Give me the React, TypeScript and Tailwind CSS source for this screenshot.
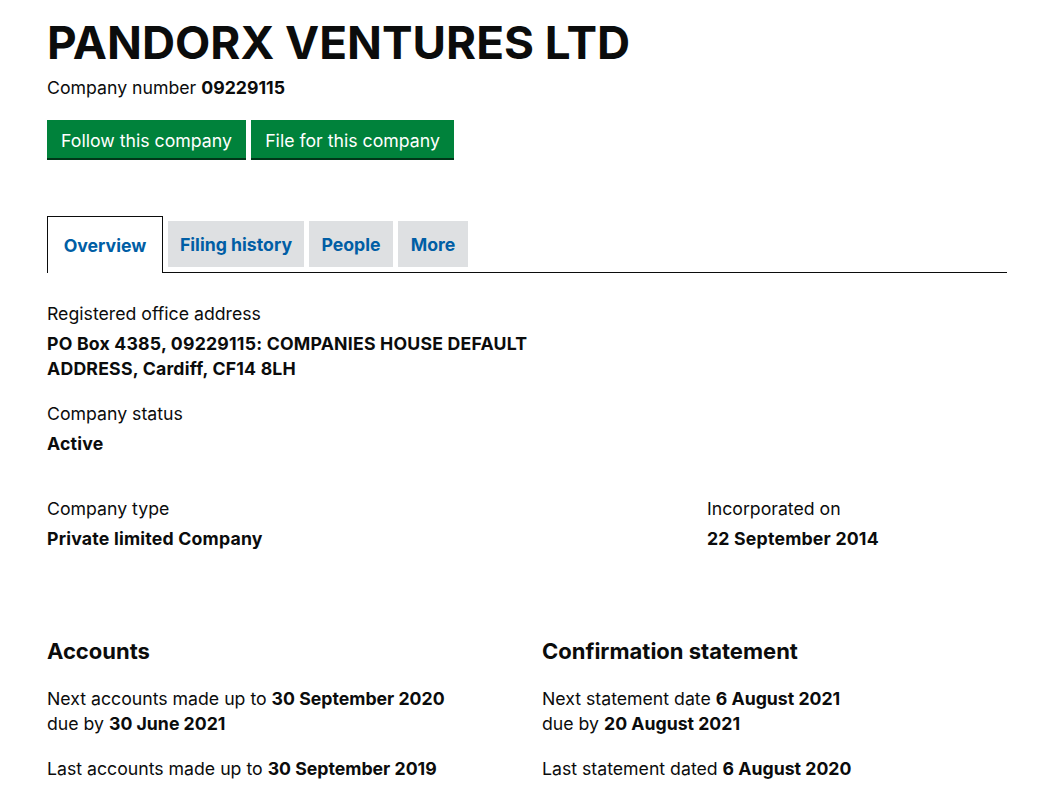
import React from "react";

const F = { fontFamily: "Inter, 'Noto Sans', sans-serif" };

function Field({ label, children }: { label: string; children: React.ReactNode }) {
  return (
    <div>
      <div className="text-[17.7px] leading-[25px] text-[#0b0c0c]">{label}</div>
      <div className="mt-[5px] text-[17.7px] leading-[25px] font-bold text-[#0b0c0c] tracking-[0.2px]">{children}</div>
    </div>
  );
}

export default function App() {
  return (
    <div className="min-h-[803px] bg-white text-[#0b0c0c]" style={F}>
      <div className="w-[960px] ml-[47px]">
        <h1 className="pt-[14px] text-[45.8px] leading-[58px] font-bold">PANDORX VENTURES LTD</h1>
        <p className="mt-[3px] text-[17.7px] leading-[25px]">
          Company number <strong className="font-bold">09229115</strong>
        </p>
        <div className="mt-[20px] flex gap-[5px]">
          <button className="h-[38px] w-[199px] pt-[4px] bg-[#00823b] text-white text-[17.7px] shadow-[0_2px_0_#003618]">Follow this company</button>
          <button className="h-[38px] w-[203px] pt-[4px] bg-[#00823b] text-white text-[17.7px] shadow-[0_2px_0_#003618]">File for this company</button>
        </div>
        <div className="mt-[58px] flex items-end border-b border-[#0b0c0c] gap-[5px]">
          <div className="h-[57px] w-[116px] pt-[3px] -mb-px border border-b-0 border-[#0b0c0c] bg-white flex items-center justify-center text-[#005ea5] font-bold text-[17.7px]">Overview</div>
          <div className="h-[46px] w-[136px] pt-[3px] mb-[5px] bg-[#dee0e2] flex items-center justify-center text-[#005ea5] font-bold text-[17.7px]">Filing history</div>
          <div className="h-[46px] w-[84px] pt-[3px] mb-[5px] bg-[#dee0e2] flex items-center justify-center text-[#005ea5] font-bold text-[17.7px]">People</div>
          <div className="h-[46px] w-[70px] pt-[3px] mb-[5px] bg-[#dee0e2] flex items-center justify-center text-[#005ea5] font-bold text-[17.7px]">More</div>
        </div>
        <div className="mt-[28px] flex flex-col gap-[20px]">
          <Field label="Registered office address">
            PO Box 4385, 09229115: COMPANIES HOUSE DEFAULT<br />ADDRESS, Cardiff, CF14 8LH
          </Field>
          <Field label="Company status">Active</Field>
        </div>
        <div className="mt-[40px] flex">
          <div className="w-[660px]">
            <Field label="Company type">Private limited Company</Field>
          </div>
          <div>
            <Field label="Incorporated on">22 September 2014</Field>
          </div>
        </div>
        <div className="mt-[85px] flex">
          <div className="w-[495px]">
            <h2 className="text-[22px] leading-[30px] font-bold">Accounts</h2>
            <p className="mt-[20px] text-[17.7px] leading-[25px]">
              Next accounts made up to <strong>30 September 2020</strong>
              <br />due by <strong>30 June 2021</strong>
            </p>
            <p className="mt-[20px] text-[17.7px] leading-[25px]">
              Last accounts made up to <strong>30 September 2019</strong>
            </p>
          </div>
          <div>
            <h2 className="text-[22px] leading-[30px] font-bold">Confirmation statement</h2>
            <p className="mt-[20px] text-[17.7px] leading-[25px]">
              Next statement date <strong>6 August 2021</strong>
              <br />due by <strong>20 August 2021</strong>
            </p>
            <p className="mt-[20px] text-[17.7px] leading-[25px]">
              Last statement dated <strong>6 August 2020</strong>
            </p>
          </div>
        </div>
      </div>
    </div>
  );
}
